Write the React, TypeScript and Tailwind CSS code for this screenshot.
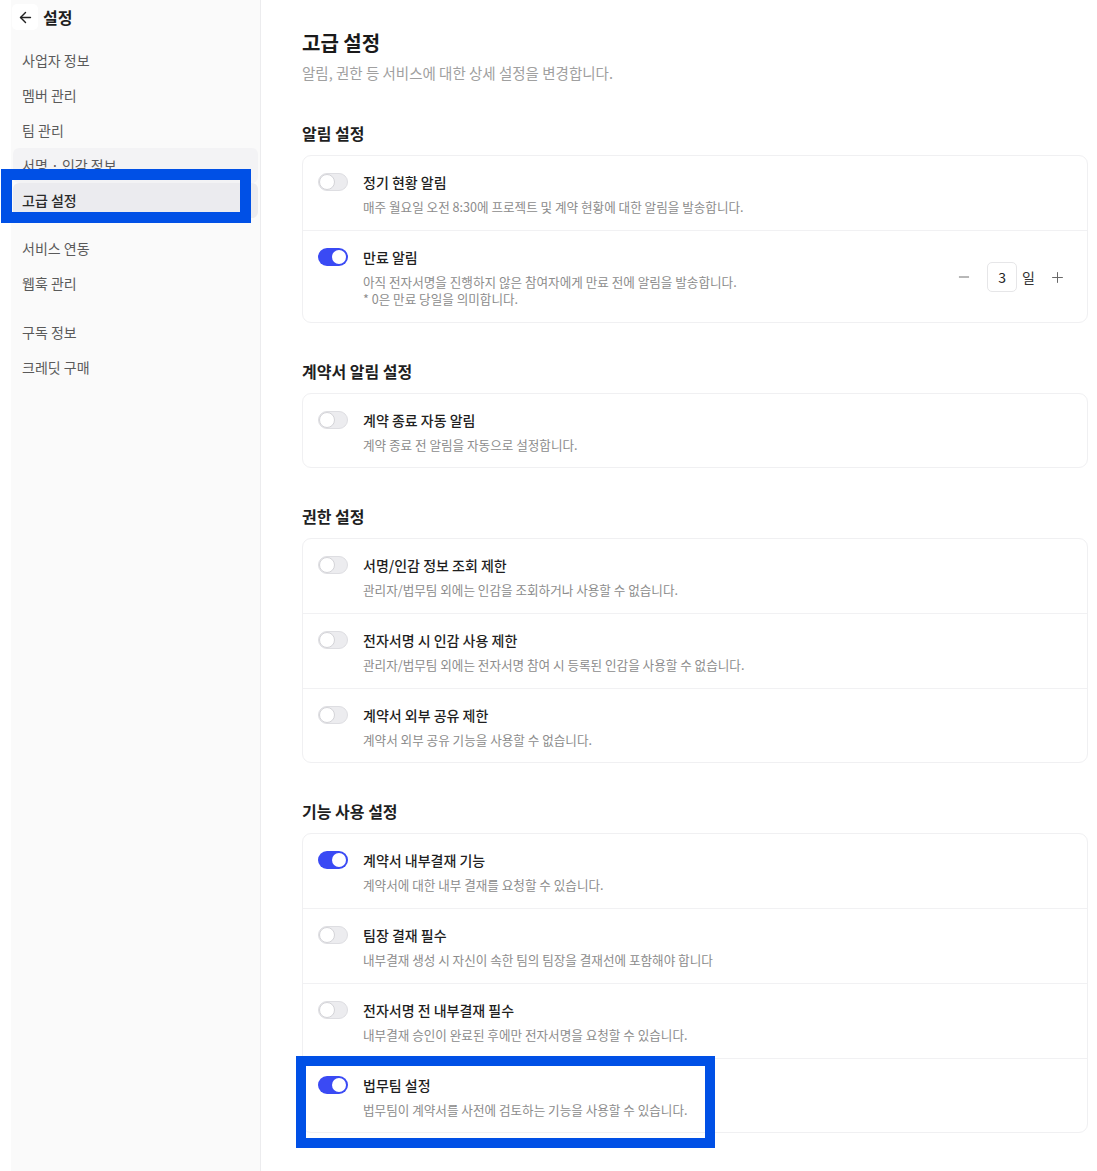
import React from "react";
import { ArrowLeft, Minus, Plus } from "lucide-react";

const FONT = { fontFamily: '"Noto Sans CJK KR", "Noto Sans", sans-serif' };

function Toggle({ on }: { on: boolean }) {
  return on ? (
    <div className="relative w-[30px] h-[18px] rounded-full bg-[#3a4af4] shrink-0">
      <div className="absolute right-[2px] top-[2px] w-[14px] h-[14px] rounded-full bg-white" />
    </div>
  ) : (
    <div className="relative w-[30px] h-[18px] rounded-full bg-[#ececef] border border-[#dedee2] shrink-0">
      <div className="absolute left-[0px] top-[0px] w-[16px] h-[16px] rounded-full bg-white border border-[#d4d4d8]" />
    </div>
  );
}

type RowData = { on: boolean; title: string; desc: string[]; stepper?: boolean };

function Row({ r, last }: { r: RowData; last: boolean }) {
  const pad = last ? (r.desc.length > 1 ? "pb-[15px]" : "pb-[14px]") : "pb-[15px] border-b border-[#f1f1f3]";
  return (
    <div className={`flex items-center pl-[15px] pr-4 pt-4 ${pad}`}>
      <div className="flex items-start flex-1">
        <div className="mt-[1px]">
          <Toggle on={r.on} />
        </div>
        <div className="ml-[15px]">
          <div className="text-[14px] leading-5 font-medium text-[#1f1f1f]">{r.title}</div>
          <div className="mt-[6px] text-[12.6px] leading-[17px] text-[#8c8c8c]">
            {r.desc.map((d, i) => (
              <div key={i}>{d}</div>
            ))}
          </div>
        </div>
      </div>
      {r.stepper && (
        <div className="flex items-center mr-[5px] text-[#555]">
          <Minus size={16} strokeWidth={1.4} className="text-[#666]" />
          <div className="ml-[15px] w-[30px] h-[30px] rounded-[5px] border border-[#e6e6e8] flex items-center justify-center text-[14px] text-[#222]">
            3
          </div>
          <span className="ml-[5px] text-[14px] text-[#333]">일</span>
          <Plus size={17} strokeWidth={1.4} className="ml-[14px] text-[#666]" />
        </div>
      )}
    </div>
  );
}

function Section({ title, rows, first }: { title: string; rows: RowData[]; first?: boolean }) {
  return (
    <div className={first ? "mt-[38px]" : "mt-9"}>
      <div className="text-[16px] leading-6 font-semibold text-[#1f1f1f]">{title}</div>
      <div className="mt-[10px] rounded-[9px] border border-[#f0f0f2] bg-white">
        {rows.map((r, i) => (
          <Row key={i} r={r} last={i === rows.length - 1} />
        ))}
      </div>
    </div>
  );
}

function NavItem({ label, state }: { label: string; state?: "hover" | "active" }) {
  const bg = state === "active" ? "bg-[#ebebef]" : state === "hover" ? "bg-[#f3f3f5]" : "";
  const tc = state === "active" ? "text-[#2a2a2a] font-medium" : "text-[#5a5a5a]";
  return (
    <div className={`mx-[2px] h-[35px] flex items-center pl-[9px] rounded-[6px] text-[14px] ${bg} ${tc}`}>
      {label}
    </div>
  );
}

export default function App() {
  return (
    <div className="relative w-[1097px] h-[1171px] bg-white flex overflow-hidden" style={FONT}>
      <div className="ml-[11px] w-[250px] h-full bg-[#fafafa] border-r border-[#ececee] shrink-0">
        <div className="flex items-center h-[34px]">
          <div className="ml-[1px] w-[26px] h-[26px] rounded-[5px] bg-white flex items-center justify-center">
            <ArrowLeft size={17} strokeWidth={2} className="text-[#222]" />
          </div>
          <span className="ml-[5px] text-[16px] font-bold text-[#1f1f1f]">설정</span>
        </div>
        <div className="mt-[9px]">
          <NavItem label="사업자 정보" />
          <NavItem label="멤버 관리" />
          <NavItem label="팀 관리" />
          <NavItem label="서명 · 인감 정보" state="hover" />
          <NavItem label="고급 설정" state="active" />
          <div className="h-[13px]" />
          <NavItem label="서비스 연동" />
          <NavItem label="웹훅 관리" />
          <div className="h-[14px]" />
          <NavItem label="구독 정보" />
          <NavItem label="크레딧 구매" />
        </div>
      </div>

      <div className="flex-1 pl-[41px] pr-[9px] pt-[29px]">
        <div className="text-[20px] leading-7 font-semibold text-[#1a1a1a]">고급 설정</div>
        <div className="mt-[6px] text-[14.5px] leading-5 text-[#a0a0a0]">
          알림, 권한 등 서비스에 대한 상세 설정을 변경합니다.
        </div>

        <Section
          first
          title="알림 설정"
          rows={[
            { on: false, title: "정기 현황 알림", desc: ["매주 월요일 오전 8:30에 프로젝트 및 계약 현황에 대한 알림을 발송합니다."] },
            {
              on: true,
              title: "만료 알림",
              desc: ["아직 전자서명을 진행하지 않은 참여자에게 만료 전에 알림을 발송합니다.", "* 0은 만료 당일을 의미합니다."],
              stepper: true,
            },
          ]}
        />
        <Section
          title="계약서 알림 설정"
          rows={[{ on: false, title: "계약 종료 자동 알림", desc: ["계약 종료 전 알림을 자동으로 설정합니다."] }]}
        />
        <Section
          title="권한 설정"
          rows={[
            { on: false, title: "서명/인감 정보 조회 제한", desc: ["관리자/법무팀 외에는 인감을 조회하거나 사용할 수 없습니다."] },
            { on: false, title: "전자서명 시 인감 사용 제한", desc: ["관리자/법무팀 외에는 전자서명 참여 시 등록된 인감을 사용할 수 없습니다."] },
            { on: false, title: "계약서 외부 공유 제한", desc: ["계약서 외부 공유 기능을 사용할 수 없습니다."] },
          ]}
        />
        <Section
          title="기능 사용 설정"
          rows={[
            { on: true, title: "계약서 내부결재 기능", desc: ["계약서에 대한 내부 결재를 요청할 수 있습니다."] },
            { on: false, title: "팀장 결재 필수", desc: ["내부결재 생성 시 자신이 속한 팀의 팀장을 결재선에 포함해야 합니다"] },
            { on: false, title: "전자서명 전 내부결재 필수", desc: ["내부결재 승인이 완료된 후에만 전자서명을 요청할 수 있습니다."] },
            { on: true, title: "법무팀 설정", desc: ["법무팀이 계약서를 사전에 검토하는 기능을 사용할 수 있습니다."] },
          ]}
        />
      </div>

      <div className="absolute left-[1px] top-[169px] w-[250px] h-[54px] border-[11px] border-[#0050e6] pointer-events-none" />
      <div className="absolute left-[296px] top-[1056px] w-[419px] h-[92px] border-[10px] border-[#0050e6] pointer-events-none" />
    </div>
  );
}
